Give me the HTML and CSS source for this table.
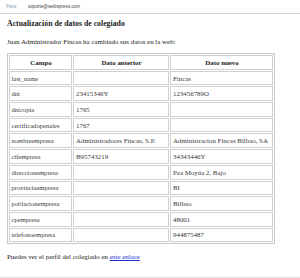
FILE: index.html
```html
<!DOCTYPE html>
<html>
<head>
<meta charset="utf-8">
<link rel="stylesheet" href="styles.css">
</head>
<body>
<div class="header">
  <span class="lbl">Para:</span>
  <span class="to">soporte@webspreso.com</span>
</div>
<div class="mail">
  <h1 class="title">Actualización de datos de colegiado</h1>
  <p class="intro">Juan Administrador Fincas ha cambiado sus datos en la web:</p>
  <table class="data">
    <tr><th class="c1">Campo</th><th class="c2">Dato anterior</th><th class="c3">Dato nuevo</th></tr>
    <tr><td>last_name</td><td></td><td>Fincas</td></tr>
    <tr><td>dni</td><td>23415346Y</td><td>123456789O</td></tr>
    <tr><td>dnicopia</td><td>1765</td><td></td></tr>
    <tr><td>certificadopenales</td><td>1767</td><td></td></tr>
    <tr><td>nombreempresa</td><td>Administradores Fincas, S.P.</td><td>Administracion Fincas Bilbao, SA</td></tr>
    <tr><td>cifempresa</td><td>B95743219</td><td>34343446Y</td></tr>
    <tr><td>direccionempresa</td><td></td><td>Pza Moyúa 2, Bajo</td></tr>
    <tr><td>provinciaempresa</td><td></td><td>BI</td></tr>
    <tr><td>poblacionempresa</td><td></td><td>Bilbao</td></tr>
    <tr><td>cpempresa</td><td></td><td>48001</td></tr>
    <tr><td>telefonoempresa</td><td></td><td>944875487</td></tr>
  </table>
  <p class="outro">Puedes ver el perfil del colegiado en <a href="#">este enlace</a></p>
</div>
</body>
</html>
```
FILE: styles.css
```css
html, body { margin: 0; padding: 0; background: #fff; }
body { width: 300px; height: 278px; overflow: hidden; font-family: "Liberation Serif", serif; color: #222; }
.header { height: 13px; border-bottom: 1px solid #c9d5e2; display: flex; align-items: center; font-family: "Liberation Sans", sans-serif; font-size: 4.6px; }
.lbl { color: #8aa0b8; margin-left: 6px; width: 22px; }
.to { color: #444; }
.mail { padding: 0 7px; border-bottom: 1px solid #e2e2e2; height: 263px; }
.title { font-size: 7.8px; font-weight: bold; margin: 0; padding-top: 4px; line-height: 11px; }
.intro { font-size: 6.95px; margin: 0; padding-top: 8px; line-height: 10px; }
.data { border: 1px solid #c8c8c8; border-spacing: 1px; margin-top: 6px; width: 268px; font-size: 6.9px; table-layout: fixed; }
.data th, .data td { border: 1px solid #d0d0d0; height: 12.7px; padding: 0 1px 0 2px; text-align: left; white-space: nowrap; overflow: hidden; color: #3a3a3a; }
.data th { text-align: center; font-weight: bold; color: #222; }
.data td:first-child { font-size: 6.6px; padding-left: 1.5px; }
.c1 { width: 58px; }
.c2 { width: 91px; }
.outro { font-size: 6.95px; margin: 0; padding-top: 8px; line-height: 10px; }
.outro a { color: #1a2fd8; }
```
